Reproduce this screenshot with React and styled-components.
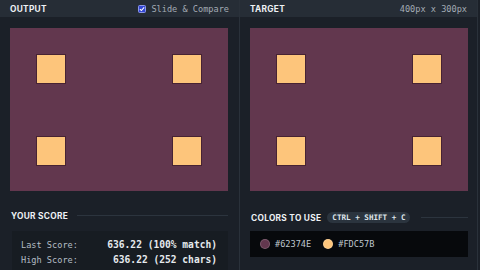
import React from "react";
import styled, { createGlobalStyle } from "styled-components";

const Global = createGlobalStyle`
  html, body { margin: 0; padding: 0; background: #1b2028; overflow: hidden; }
  * { box-sizing: border-box; }
`;

const Page = styled.div`
  width: 480px;
  height: 270px;
  display: grid;
  grid-template-columns: 240px 238px 2px;
  background: #1b2028;
  overflow: hidden;
`;

const Panel = styled.div`
  display: flex;
  flex-direction: column;
  border-right: 1px solid ${(p) => p.$edge || "#2a313a"};
  height: 270px;
`;

const Header = styled.div`
  height: 17px;
  background: #262d36;
  display: flex;
  align-items: center;
  justify-content: space-between;
  padding: 0 10px 0 10px;
  flex-shrink: 0;
`;

const Title = styled.span`
  font-family: Inter, "Noto Sans", sans-serif;
  font-weight: 700;
  font-size: 8.3px;
  letter-spacing: 0.3px;
  color: #eef1f4;
`;

const Mono = styled.span`
  font-family: "DejaVu Sans Mono", "Liberation Mono", monospace;
  font-size: ${(p) => p.$size || 8.6}px;
  font-weight: ${(p) => (p.$bold ? 700 : 400)};
  color: ${(p) => p.$color || "#a3abb4"};
  white-space: pre;
`;

const CheckLabel = styled.label`
  display: flex;
  align-items: center;
  gap: 5px;
`;

const Check = styled.span`
  width: 8px;
  height: 8px;
  border-radius: 1.5px;
  background: #3346d3;
  border: 1px solid #8d98e8;
  display: flex;
  align-items: center;
  justify-content: center;
`;

const Body = styled.div`
  padding: 11px ${(p) => p.$pr || 11}px 0 10px;
  display: flex;
  flex-direction: column;
`;

const Canvas = styled.div`
  position: relative;
  width: 218px;
  height: 163px;
  background: #62374e;
  overflow: hidden;
`;

const Square = styled.div`
  position: absolute;
  width: 28px;
  height: 28px;
  background: #fdc57b;
  box-shadow: 0 0 0 1px rgba(40, 10, 20, 0.45);
`;

const SectionRow = styled.div`
  display: flex;
  align-items: center;
  gap: ${(p) => p.$gap || 9}px;
  margin-top: ${(p) => p.$mt || 19}px;
  padding-left: 1px;
  height: 11px;
`;

const Rule = styled.div`
  flex: 1;
  height: 1px;
  background: #2c343e;
  margin-left: ${(p) => p.$ml || 0}px;
`;

const Pill = styled.span`
  background: #2b343e;
  border-radius: 6px;
  padding: 0 5px;
  height: 11px;
  display: inline-flex;
  align-items: center;
  font-family: "DejaVu Sans Mono", "Liberation Mono", monospace;
  font-weight: 700;
  font-size: 7.6px;
  color: #dfe4ea;
  white-space: pre;
`;

const ScoreBox = styled.div`
  margin-top: 10px;
  margin-left: 2px;
  background: #171c22;
  padding: 6px 11px 0 9px;
  height: 60px;
  display: grid;
  grid-template-columns: auto 1fr;
  grid-auto-rows: 15px;
  align-items: center;
`;

const Value = styled(Mono)`
  text-align: right;
`;

const ColorBox = styled.div`
  margin-top: 8px;
  background: #07090c;
  height: 26px;
  display: flex;
  align-items: center;
  padding-left: 10px;
  gap: 12px;
`;

const Swatch = styled.div`
  display: flex;
  align-items: center;
  gap: 5px;
`;

const Dot = styled.span`
  width: 10px;
  height: 10px;
  border-radius: 50%;
  background: ${(p) => p.$c};
  border: 1px solid rgba(255, 255, 255, 0.18);
`;

const Edge = styled.div`
  background: #1b2028;
`;

const squares = [
  [27, 27],
  [163, 27],
  [27, 109],
  [163, 109],
];

function Art() {
  return (
    <Canvas>
      {squares.map(([x, y], i) => (
        <Square key={i} style={{ left: x, top: y }} />
      ))}
    </Canvas>
  );
}

export default function App() {
  return (
    <>
      <Global />
      <Page>
        <Panel>
          <Header>
            <Title>OUTPUT</Title>
            <CheckLabel>
              <Check>
                <svg width="6" height="6" viewBox="0 0 10 10">
                  <path d="M1.5 5.2 L4 7.6 L8.6 2.4" fill="none" stroke="#fff" strokeWidth="1.8" />
                </svg>
              </Check>
              <Mono>Slide &amp; Compare</Mono>
            </CheckLabel>
          </Header>
          <Body>
            <Art />
            <SectionRow>
              <Title>YOUR SCORE</Title>
              <Rule />
            </SectionRow>
            <ScoreBox>
              <Mono $color="#b4bcc5">Last Score:</Mono>
              <Value $size={9.6} $bold $color="#e6eaee">636.22 (100% match)</Value>
              <Mono $color="#b4bcc5">High Score:</Mono>
              <Value $size={9.6} $bold $color="#e6eaee">636.22 (252 chars)</Value>
            </ScoreBox>
          </Body>
        </Panel>
        <Panel $edge="#2a313a">
          <Header>
            <Title>TARGET</Title>
            <Mono>400px x 300px</Mono>
          </Header>
          <Body $pr={9}>
            <Art />
            <SectionRow $mt={21} $gap={6}>
              <Title>COLORS TO USE</Title>
              <Pill>CTRL + SHIFT + C</Pill>
              <Rule $ml={5} />
            </SectionRow>
            <ColorBox>
              <Swatch>
                <Dot $c="#62374E" />
                <Mono $color="#bfc6cd">#62374E</Mono>
              </Swatch>
              <Swatch>
                <Dot $c="#FDC57B" />
                <Mono $color="#bfc6cd">#FDC57B</Mono>
              </Swatch>
            </ColorBox>
          </Body>
        </Panel>
        <Edge />
      </Page>
    </>
  );
}
